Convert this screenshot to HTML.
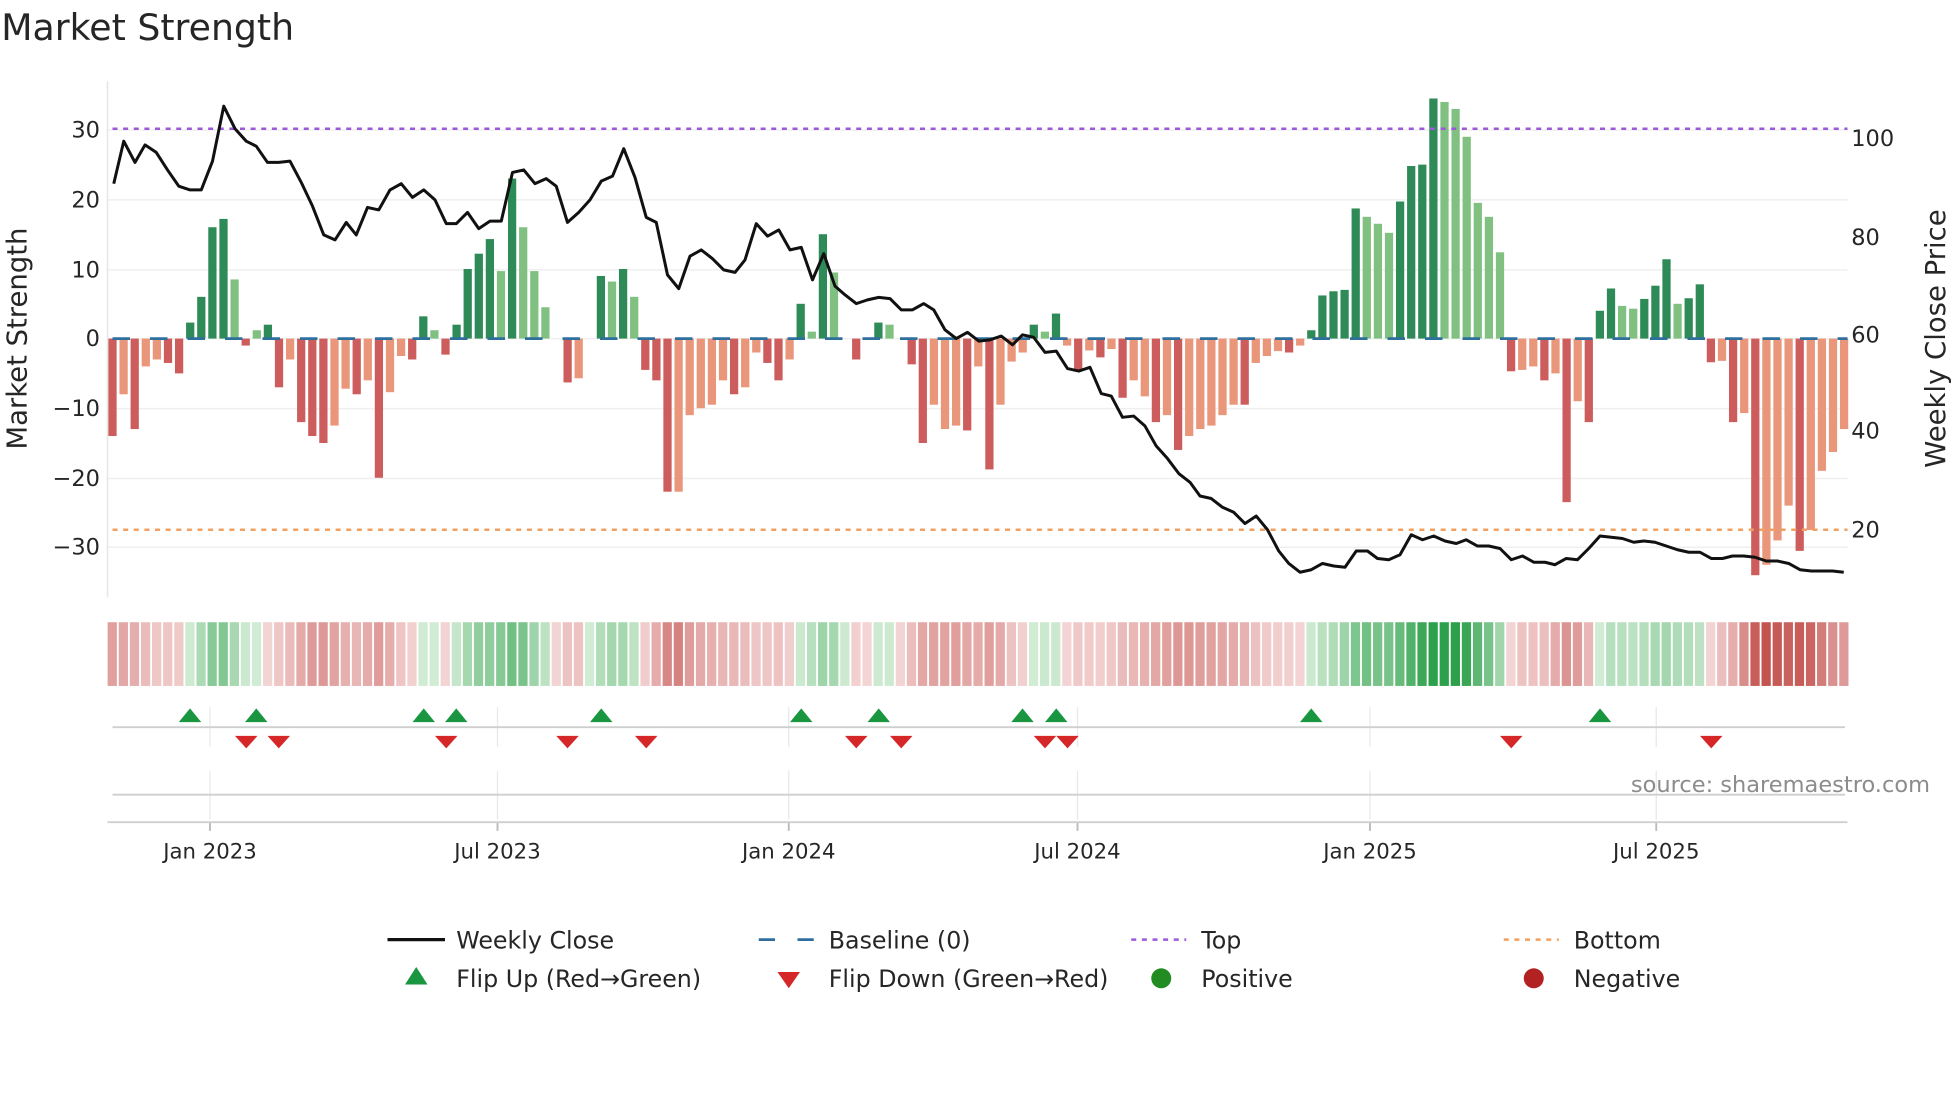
<!DOCTYPE html>
<html><head><meta charset="utf-8"><style>
html,body{margin:0;padding:0;background:#fff;}
svg{display:block;}
text{font-family:"DejaVu Sans","Liberation Sans",sans-serif;fill:#262626;}
</style></head><body>
<svg id="s" width="1960" height="1102" viewBox="0 0 1568 882" preserveAspectRatio="none" xmlns="http://www.w3.org/2000/svg">
<rect width="1568" height="882" fill="#fff"/>
<text x="1" y="32" font-size="29">Market Strength</text>
<g id="grid"></g>
<line x1="86" y1="65" x2="86" y2="478" stroke="#e6e6e6" stroke-width="1.2"/>
<g id="bars"></g>
<line x1="90" y1="271" x2="1478" y2="271" stroke="#2e6f9e" stroke-width="2.2" stroke-dasharray="14,16"/>
<line x1="90" y1="103" x2="1478" y2="103" stroke="#9b59d9" stroke-width="2" stroke-dasharray="4,4.5"/>
<line x1="90" y1="424" x2="1478" y2="424" stroke="#f0a060" stroke-width="2" stroke-dasharray="4,4.5"/>
<polyline id="price" fill="none" stroke="#111" stroke-width="2.4" stroke-linejoin="round"/>
<g font-size="18" text-anchor="end">
<text x="80" y="110">30</text><text x="80" y="166">20</text><text x="80" y="222">10</text><text x="80" y="277">0</text>
<text x="80" y="333">−10</text><text x="80" y="389">−20</text><text x="80" y="444">−30</text>
</g>
<g font-size="18">
<text x="1481" y="117">100</text><text x="1481" y="196">80</text><text x="1481" y="274">60</text><text x="1481" y="351">40</text><text x="1481" y="430">20</text>
</g>
<text transform="translate(21,271) rotate(-90)" font-size="22" text-anchor="middle">Market Strength</text>
<text transform="translate(1556,271) rotate(-90)" font-size="22" text-anchor="middle">Weekly Close Price</text>
<g id="heat"></g>
<g id="vg" stroke="#e8e8e8" stroke-width="1"></g>
<line x1="90" y1="582" x2="1476" y2="582" stroke="#cfcfcf" stroke-width="1.5"/>
<line x1="90" y1="636" x2="1476" y2="636" stroke="#cfcfcf" stroke-width="1.5"/>
<line x1="86" y1="658" x2="1478" y2="658" stroke="#cfcfcf" stroke-width="1.5"/>
<g id="marks"></g>
<text x="1544" y="634" font-size="18" text-anchor="end" style="fill:#8c8c8c">source: sharemaestro.com</text>
<g font-size="17" text-anchor="middle" id="dl"></g>
<g font-size="19">
<line x1="310" y1="752" x2="356" y2="752" stroke="#111" stroke-width="2.6"/>
<text x="365" y="759">Weekly Close</text>
<line x1="607" y1="752" x2="651" y2="752" stroke="#2e6f9e" stroke-width="2.2" stroke-dasharray="13,18"/>
<text x="663" y="759">Baseline (0)</text>
<line x1="905" y1="752" x2="949" y2="752" stroke="#9b59d9" stroke-width="2" stroke-dasharray="4,4.5"/>
<text x="961" y="759">Top</text>
<line x1="1203" y1="752" x2="1247" y2="752" stroke="#f0a060" stroke-width="2" stroke-dasharray="4,4.5"/>
<text x="1259" y="759">Bottom</text>
<polygon points="324,788 342,788 333,774" fill="#1a9641"/>
<text x="365" y="790">Flip Up (Red→Green)</text>
<polygon points="622,778 640,778 631,791" fill="#d62728"/>
<text x="663" y="790">Flip Down (Green→Red)</text>
<circle cx="929" cy="783" r="8" fill="#228b22"/>
<text x="961" y="790">Positive</text>
<circle cx="1227" cy="783" r="8" fill="#b22222"/>
<text x="1259" y="790">Negative</text>
</g>
</svg>
<script>
var NS="http://www.w3.org/2000/svg";
function el(p,t,a){var e=document.createElementNS(NS,t);for(var k in a)e.setAttribute(k,a[k]);document.getElementById(p).appendChild(e);return e;}
[104,160,216,271,327,383,438].forEach(function(y){el("grid","line",{x1:86,x2:1478,y1:y,y2:y,stroke:"#efefef","stroke-width":1.2});});
var d="-14D -8L -13D -4L -3L -3.5D -5D 2.3D 6D 16D 17.2D 8.5L -1D 1.2L 2D -7D -3L -12D -14D -15D -12.5L -7.2L -8D -6L -20D -7.7L -2.5L -3D 3.2D 1.2L -2.3D 2D 10D 12.2D 14.3D 9.7L 23D 16L 9.7L 4.5L 0L -6.3D -5.7L 0L 9D 8.2L 10D 6L -4.5D -6D -22D -22L -11L -10L -9.5L -6L -8D -7L -2L -3.5D -6D -3L 5D 1L 15D 9.5L 0L -3D 0L 2.3D 2L 0L -3.7D -15D -9.5L -13L -12.5L -13.2D -4L -18.8D -9.5L -3.3L -2L 2D 1L 3.6D -1L -4.5D -1.7L -2.7D -1.5L -8.5D -6L -8.3L -12D -11L -16D -14L -13L -12.5L -11L -9.5L -9.5D -3.5L -2.5L -1.8L -2D -1L 1.2D 6.2D 6.8D 7D 18.7D 17.5L 16.5L 15.2L 19.7D 24.8D 25D 34.5D 34L 33L 29L 19.5L 17.5L 12.4L -4.7D -4.5L -4L -6D -5L -23.5D -9L -12D 4D 7.2D 4.7L 4.3L 5.7D 7.6D 11.4D 5L 5.8D 7.8D -3.4D -3.2L -12D -10.7L -34D -32.5L -29L -24L -30.5D -27.5L -19L -16.3L -13L".split(" ");
var vals=[];
d.forEach(function(s,i){
 var v=parseFloat(s),t=s.slice(-1),x=90+8.88*i;vals.push(v);
 if(v==0)return;
 var col=v>0?(t=="D"?"#2e8b57":"#80c080"):(t=="D"?"#cd5c5c":"#e9967a");
 var y0=271,h=v*5.57;
 el("bars","rect",{x:x-3.3,width:6.6,y:v>0?y0-h:y0,height:Math.abs(h),fill:col});
});
function mix(a,b,t){return "rgb("+[0,1,2].map(function(k){return Math.round(a[k]+(b[k]-a[k])*t);}).join(",")+")";}
vals.forEach(function(v,i){
 var s=(vals[Math.max(0,i-1)]+2*v+vals[Math.min(vals.length-1,i+1)])/4;
 var c,t=Math.min(1,Math.abs(s)/30);
 if(s>=0)c=mix([214,238,216],[44,160,74],t);else c=mix([244,214,214],[196,84,80],t);
 el("heat","rect",{x:90+8.88*i-3.9,width:7.4,y:498,height:51,fill:c});
});
var p="91,147 99,113 108,130 116,116 125,122 134,136 143,149 152,152 161,152 170,129 179,85 188,103 197,113 205,117 214,130 223,130 232,129 241,146 250,165 259,188 268,192 277,178 285,188 294,166 303,168 312,152 321,147 330,158 339,152 348,160 357,179 365,179 374,170 383,183 392,177 401,177 410,138 419,136 428,147 437,143 445,149 454,178 463,170 472,160 481,145 490,141 499,119 508,142 517,174 525,178 534,220 543,231 552,205 561,200 570,207 579,216 588,218 596,208 605,179 614,189 623,184 632,200 641,198 650,224 659,203 668,229 676,236 685,243 694,240 703,238 712,239 721,248 730,248 739,243 747,248 756,264 765,271 774,266 783,273 792,272 801,269 810,276 818,268 827,270 836,282 845,281 854,295 863,297 872,294 881,315 889,317 898,334 907,333 916,341 925,357 934,367 943,379 952,386 960,397 969,399 978,406 987,410 996,419 1005,413 1014,424 1023,441 1031,451 1040,458 1049,456 1058,451 1067,453 1076,454 1085,441 1094,441 1102,447 1111,448 1120,444 1129,428 1138,432 1147,429 1156,433 1165,435 1173,432 1182,437 1191,437 1200,439 1209,448 1218,445 1227,450 1236,450 1244,452 1253,447 1262,448 1271,439 1280,429 1289,430 1298,431 1307,434 1315,433 1324,434 1333,437 1342,440 1351,442 1360,442 1369,447 1378,447 1386,445 1395,445 1404,446 1413,449 1422,449 1431,451 1440,456 1449,457 1457,457 1466,457 1475,458";
document.getElementById("price").setAttribute("points",p);
[[168,"Jan 2023"],[398,"Jul 2023"],[631,"Jan 2024"],[862,"Jul 2024"],[1096,"Jan 2025"],[1325,"Jul 2025"]].forEach(function(a){
 el("vg","line",{x1:a[0],x2:a[0],y1:566,y2:598});
 el("vg","line",{x1:a[0],x2:a[0],y1:617,y2:656});
 el("vg","line",{x1:a[0],x2:a[0],y1:658,y2:665,stroke:"#bbb","stroke-width":1.5});
 var t=el("dl","text",{x:a[0],y:687});t.textContent=a[1];
});
[152,205,339,365,481,641,703,818,845,1049,1280].forEach(function(x){el("marks","polygon",{points:(x-9)+",578 "+(x+9)+",578 "+x+",567",fill:"#1a9641"});});
[197,223,357,454,517,685,721,836,854,1209,1369].forEach(function(x){el("marks","polygon",{points:(x-9)+",589 "+(x+9)+",589 "+x+",599",fill:"#d62728"});});
</script>
</body></html>
